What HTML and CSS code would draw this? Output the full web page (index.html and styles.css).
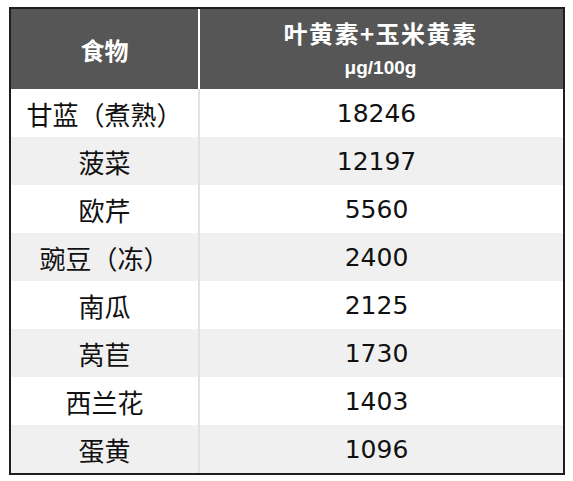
FILE: index.html
```html
<!DOCTYPE html>
<html lang="zh">
<head>
<meta charset="utf-8">
<link rel="stylesheet" href="styles.css">
</head>
<body>
<div class="table">
  <div class="row head">
    <div class="cell food">食物</div>
    <div class="cell val">
      <div class="title">叶黄素+玉米黄素</div>
      <div class="unit">μg/100g</div>
    </div>
  </div>
  <div class="row"><div class="cell food">甘蓝（煮熟）</div><div class="cell val num">18246</div></div>
  <div class="row alt"><div class="cell food">菠菜</div><div class="cell val num">12197</div></div>
  <div class="row"><div class="cell food">欧芹</div><div class="cell val num">5560</div></div>
  <div class="row alt"><div class="cell food">豌豆（冻）</div><div class="cell val num">2400</div></div>
  <div class="row"><div class="cell food">南瓜</div><div class="cell val num">2125</div></div>
  <div class="row alt"><div class="cell food">莴苣</div><div class="cell val num">1730</div></div>
  <div class="row"><div class="cell food">西兰花</div><div class="cell val num">1403</div></div>
  <div class="row alt"><div class="cell food">蛋黄</div><div class="cell val num">1096</div></div>
</div>
</body>
</html>
```
FILE: styles.css
```css
html, body {
  margin: 0;
  padding: 0;
  background: #ffffff;
}
body {
  font-family: "DejaVu Sans", "Noto Sans CJK SC", sans-serif;
  color: #111;
}
.table {
  margin: 7px 0 0 9px;
  width: 556px;
  border: 2px solid #1e1e1e;
  box-sizing: border-box;
  display: flex;
  flex-direction: column;
}
.row {
  display: grid;
  grid-template-columns: 189px 1fr;
  height: 48px;
  background: #ffffff;
}
.row.alt {
  background: #f0f0f0;
}
.cell {
  display: flex;
  align-items: center;
  justify-content: center;
}
.food {
  border-right: 2px solid #e2e2e2;
  font-family: "Noto Sans CJK SC", sans-serif;
  font-size: 26px;
}
.num {
  font-size: 25px;
  font-family: "DejaVu Sans", sans-serif;
  padding-right: 10px;
}
.row.head {
  height: 80px;
  background: #565656;
  color: #ffffff;
}
.head .food {
  border-right-color: #ffffff;
  font-weight: 700;
  font-size: 24px;
}
.head .val {
  flex-direction: column;
  font-weight: 700;
  padding-right: 2px;
}
.title {
  font-family: "Noto Sans CJK SC", sans-serif;
  font-size: 24px;
  line-height: 32px;
  letter-spacing: 1.5px;
  margin-top: -2px;
}
.unit {
  font-family: "Liberation Sans", sans-serif;
  font-size: 19px;
  line-height: 22px;
  margin-top: 8px;
}
```
